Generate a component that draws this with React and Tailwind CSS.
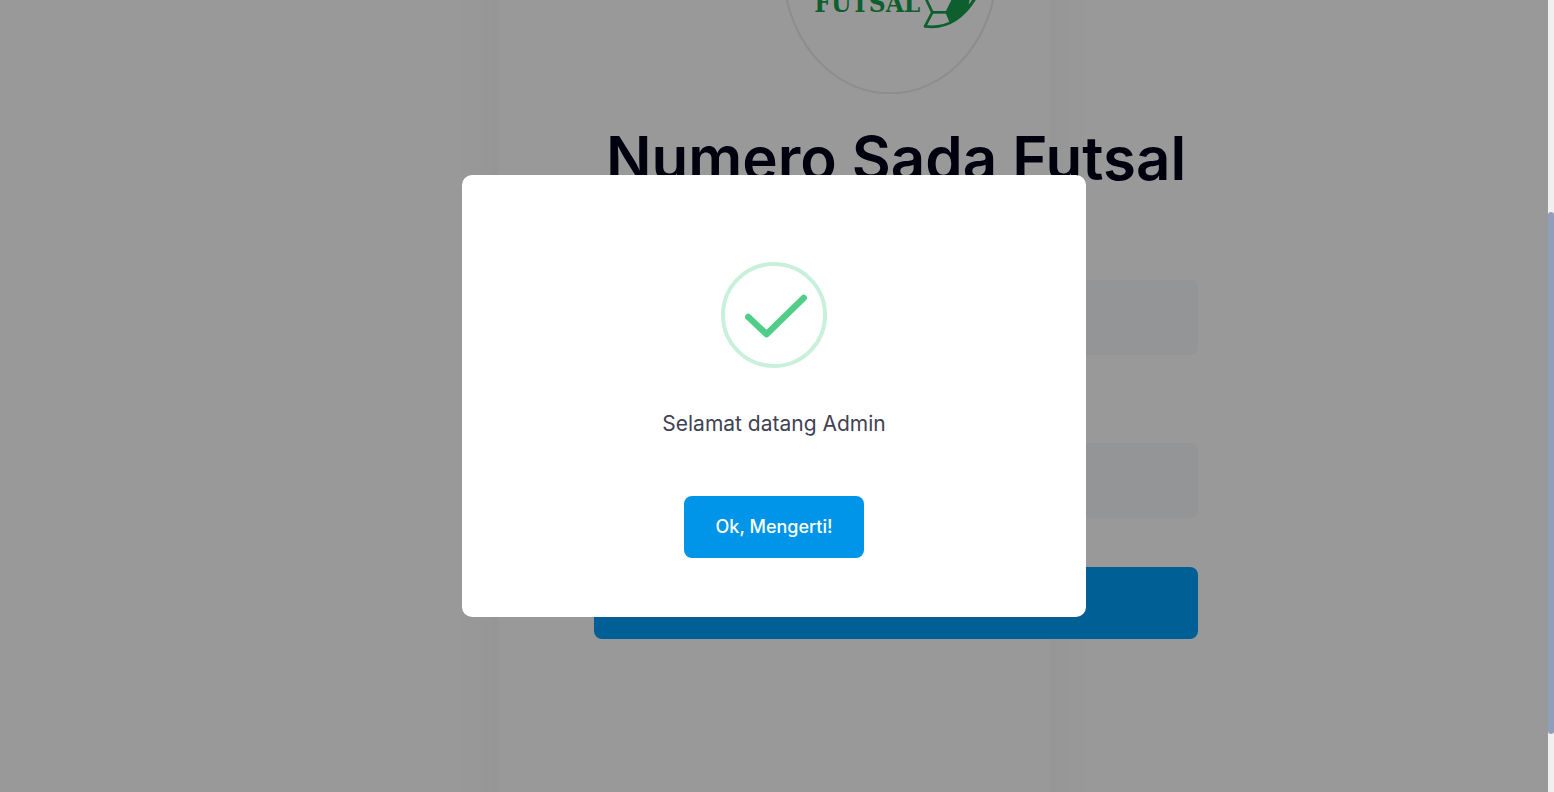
function FutsalLogo() {
  return (
    <svg viewBox="66 -474 648 756" className="block h-[252px] w-[216px]" role="img" aria-label="Futsal">
      <ellipse cx="390" cy="-96" rx="320" ry="376" fill="none" stroke="#ebebeb" strokeWidth="6" />
      <text
        x="163"
        y="35"
        fontFamily="'DejaVu Serif Condensed', 'DejaVu Serif', serif"
        fontWeight="700"
        fontSize="78"
        fill="#17a04c"
      >
        FUTSAL
      </text>
      <g fill="none" stroke="#17a04c" strokeWidth="8" strokeLinejoin="round">
        <path d="M494 -12 L517 37 L495 79 Q590 92 650 -12" />
        <path d="M517 37 H558" />
      </g>
      <path d="M580 -12 L556 37 L569 68 Q626 44 652 -12 L640 -12 Q634 8 626 12 L632 -12 Z" fill="#17a04c" />
    </svg>
  );
}

function SuccessIcon() {
  return (
    <svg viewBox="0 0 106 106" className="block size-[106px]" fill="none" aria-hidden="true">
      <circle cx="53" cy="53" r="51" stroke="#c9f0db" strokeWidth="4" />
      <path
        d="M27.3 55 L45.5 72.2 L82.7 36"
        stroke="#50cd89"
        strokeWidth="6.4"
        strokeLinecap="round"
        strokeLinejoin="round"
      />
    </svg>
  );
}

function LoginForm() {
  return (
    <div className="mx-auto -mt-[206px] min-h-[1100px] w-[552px] max-w-full bg-white px-24 pt-12 shadow-[0_0_48px_rgba(30,50,80,0.05)]">
      <form className="flex w-[604px] flex-col" onSubmit={(e) => e.preventDefault()}>
        <div className="flex justify-center pr-3">
          <FutsalLogo />
        </div>
        <h1 className="mt-6 whitespace-nowrap text-center text-[60px] leading-20 font-semibold text-[#000018]">
          Numero Sada Futsal
        </h1>
        <input
          type="text"
          aria-label="Username"
          className="mt-[82px] h-[75px] rounded-lg bg-[#f5f8fa] px-6 text-xl outline-none"
        />
        <input
          type="password"
          aria-label="Password"
          className="mt-22 h-[75px] rounded-lg bg-[#f5f8fa] px-6 text-xl outline-none"
        />
        <button type="submit" aria-label="Masuk" className="mt-[49px] h-18 rounded-lg bg-[#009ef7]" />
      </form>
    </div>
  );
}

function WelcomeDialog() {
  return (
    <div
      role="dialog"
      aria-modal="true"
      aria-labelledby="welcome-text"
      className="flex w-[624px] max-w-full flex-col items-center rounded-[10px] bg-white pt-[87px] pb-[59px]"
    >
      <SuccessIcon />
      <p id="welcome-text" className="mt-10 text-[21px] leading-8 text-[#3f4254]">
        Selamat datang Admin
      </p>
      <button
        type="button"
        className="mt-14 h-[62px] w-[180px] rounded-lg bg-[#0095e8] text-lg font-medium text-white"
      >
        Ok, Mengerti!
      </button>
    </div>
  );
}

export default function App() {
  return (
    <div className="flex h-screen overflow-hidden bg-white font-['Inter','Liberation_Sans',sans-serif]">
      <main className="relative min-w-0 flex-1 overflow-hidden">
        <LoginForm />
        <div className="absolute inset-0 flex items-center justify-center bg-black/40">
          <WelcomeDialog />
        </div>
      </main>
      <div className="w-1.5 bg-[#f0f0f0] pt-[212px]" aria-hidden="true">
        <div className="h-[522px] rounded-full bg-[#909ebe]" />
      </div>
    </div>
  );
}
